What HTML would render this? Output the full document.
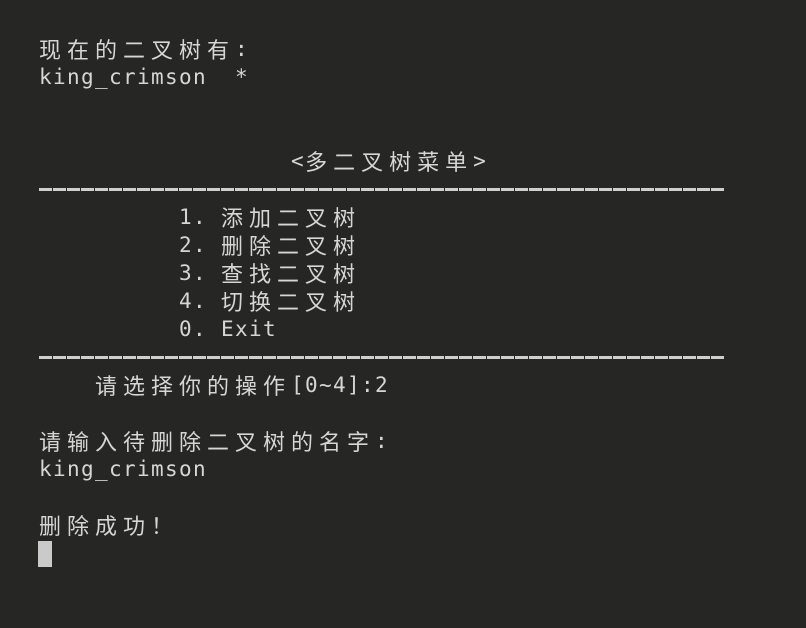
<!DOCTYPE html>
<html><head><meta charset="utf-8"><style>
html,body{margin:0;padding:0;background:#262724;width:806px;height:628px;overflow:hidden}
.l{position:absolute;left:39px;height:28px;line-height:28px;white-space:pre;color:#d6d6d4;font-family:"DejaVu Sans Mono",monospace;font-size:21px;letter-spacing:1.36px}
.l span{display:inline-block;vertical-align:top;height:28px;line-height:28px;position:relative;top:0}
.l span.c{width:28px;font-family:"Noto Sans CJK SC",sans-serif;font-size:22px;letter-spacing:0;text-align:left;top:0}
.d{position:absolute;left:39px;width:686px;height:3px;background:repeating-linear-gradient(90deg,#cfcfcd 0 13px,transparent 13px 14px)}
.cur{position:absolute;left:38px;top:541px;width:14px;height:26px;background:#cacaca}
</style></head><body>
<div class="l" style="top:35px"><span class="c">现</span><span class="c">在</span><span class="c">的</span><span class="c">二</span><span class="c">叉</span><span class="c">树</span><span class="c">有</span><span>:</span></div>
<div class="l" style="top:63px"><span>king_crimson  *</span></div>
<div class="l" style="top:147px"><span>                  &lt;</span><span class="c">多</span><span class="c">二</span><span class="c">叉</span><span class="c">树</span><span class="c">菜</span><span class="c">单</span><span>&gt;</span></div>
<div class="d" style="top:188px"></div>
<div class="l" style="top:203px"><span>          1. </span><span class="c">添</span><span class="c">加</span><span class="c">二</span><span class="c">叉</span><span class="c">树</span></div>
<div class="l" style="top:231px"><span>          2. </span><span class="c">删</span><span class="c">除</span><span class="c">二</span><span class="c">叉</span><span class="c">树</span></div>
<div class="l" style="top:259px"><span>          3. </span><span class="c">查</span><span class="c">找</span><span class="c">二</span><span class="c">叉</span><span class="c">树</span></div>
<div class="l" style="top:287px"><span>          4. </span><span class="c">切</span><span class="c">换</span><span class="c">二</span><span class="c">叉</span><span class="c">树</span></div>
<div class="l" style="top:315px"><span>          0. Exit</span></div>
<div class="d" style="top:356px"></div>
<div class="l" style="top:371px"><span>    </span><span class="c">请</span><span class="c">选</span><span class="c">择</span><span class="c">你</span><span class="c">的</span><span class="c">操</span><span class="c">作</span><span>[0~4]:2</span></div>
<div class="l" style="top:427px"><span class="c">请</span><span class="c">输</span><span class="c">入</span><span class="c">待</span><span class="c">删</span><span class="c">除</span><span class="c">二</span><span class="c">叉</span><span class="c">树</span><span class="c">的</span><span class="c">名</span><span class="c">字</span><span>:</span></div>
<div class="l" style="top:455px"><span>king_crimson</span></div>
<div class="l" style="top:511px"><span class="c">删</span><span class="c">除</span><span class="c">成</span><span class="c">功</span><span class="c">！</span></div>
<div class="cur"></div>
</body></html>
